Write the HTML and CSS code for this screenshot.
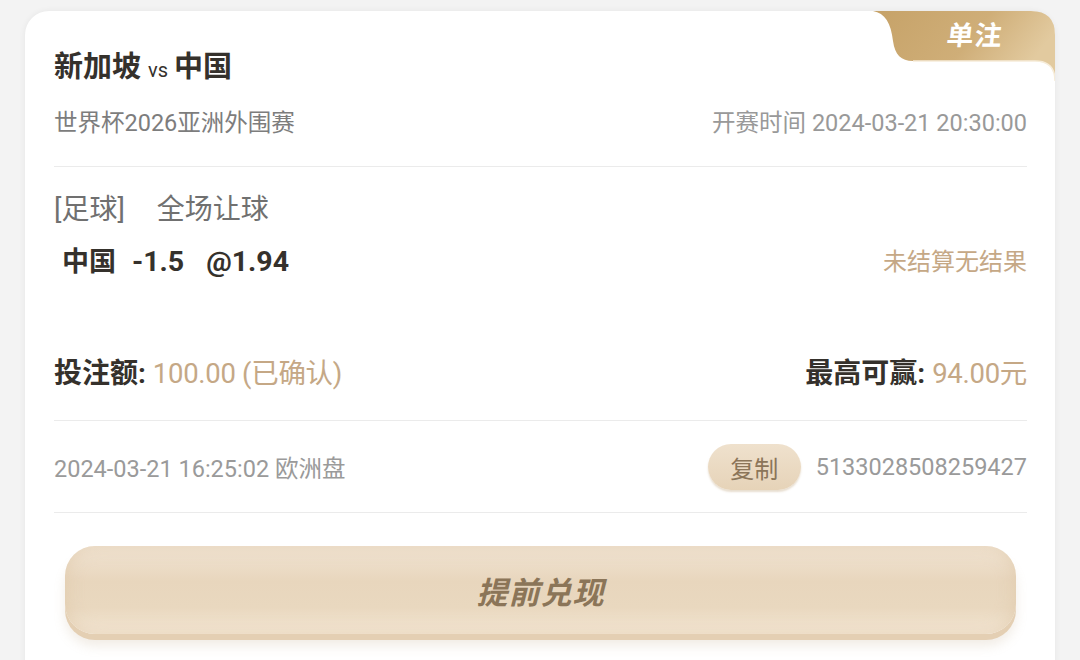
FILE: index.html
```html
<!DOCTYPE html>
<html lang="zh-CN">
<head>
    <meta charset="UTF-8">
    <meta name="viewport" content="width=device-width, initial-scale=1.0">
    <title>注单详情</title>
    <link rel="stylesheet" href="styles.css">
</head>
<body>
    <div class="card">
        <div class="tag">
            <svg class="tag-bg" width="182" height="72" viewBox="0 0 182 72">
                <defs>
                    <linearGradient id="gold" x1="0" y1="0" x2="1" y2="0.3">
                        <stop offset="0" stop-color="#c6a268"/>
                        <stop offset="0.6" stop-color="#cfae78"/>
                        <stop offset="1" stop-color="#e2ca9f"/>
                    </linearGradient>
                </defs>
                <path d="M0,0 H158 Q182,0 182,24 V70 Q182,50 162,50 H40 C28,50 22,44 20,30 C18,12 12,2 0,0 Z" fill="url(#gold)"/>
                <path d="M40,50 H162 Q182,50 182,70" fill="none" stroke="#f6ecd9" stroke-width="1.5"/>
            </svg>
            <span class="tag-text">单注</span>
        </div>

        <div class="section head">
            <h1 class="match">新加坡<span class="vs">vs</span>中国</h1>
            <div class="row meta">
                <span>世界杯2026亚洲外围赛</span>
                <span class="kickoff">开赛时间 2024-03-21 20:30:00</span>
            </div>
        </div>

        <div class="section bet">
            <div class="sport">
                <span>[足球]</span>
                <span>全场让球</span>
            </div>
            <div class="row pick">
                <span class="pick-main">中国<span class="line">-1.5</span><span class="odds">@1.94</span></span>
                <span class="status">未结算无结果</span>
            </div>
            <div class="row amount">
                <span class="label">投注额: <em>100.00 (已确认)</em></span>
                <span class="label">最高可赢: <em>94.00元</em></span>
            </div>
        </div>

        <div class="section order">
            <div class="row">
                <span class="muted">2024-03-21 16:25:02 欧洲盘</span>
                <span class="order-no">
                    <button class="copy-btn" type="button">复制</button>
                    <span class="muted">5133028508259427</span>
                </span>
            </div>
        </div>

        <button class="cashout" type="button">提前兑现</button>
    </div>
</body>
</html>
```

FILE: styles.css
```css
body {
    margin: 0;
    background: #f3f3f3;
    font-family: Roboto, "Noto Sans CJK SC", sans-serif;
    height: 660px;
    overflow: hidden;
}

.card {
    position: relative;
    margin: 11px 25px 0;
    padding: 0 28px 60px 29px;
    background: #fff;
    border-radius: 24px;
    box-shadow: 0 0 6px rgba(0, 0, 0, 0.06);
}

.tag {
    position: absolute;
    top: 0;
    right: 0;
    width: 182px;
    height: 72px;
}

.tag-bg {
    display: block;
}

.tag-text {
    position: absolute;
    top: 3px;
    left: 74px;
    font-family: "Noto Sans CJK SC", sans-serif;
    font-size: 27px;
    font-weight: 700;
    color: #fff;
    letter-spacing: 1px;
    transform: skewX(-6deg);
}

.section {
    border-bottom: 1px solid #ebebeb;
}

.row {
    display: flex;
    justify-content: space-between;
    align-items: center;
}

.head {
    padding: 36px 0 28px;
}

.match {
    margin: 0;
    font-size: 29px;
    line-height: 40px;
    font-weight: 700;
    color: #35312c;
}

.vs {
    margin: 0 6px 0 7px;
    font-family: Roboto, sans-serif;
    font-size: 20px;
    font-weight: 400;
}

.meta {
    margin-top: 18px;
    font-size: 23.5px;
    line-height: 30px;
    color: #7d7d7d;
}

.meta .kickoff {
    color: #999;
}

.bet {
    padding: 25px 0 26px;
}

.sport {
    display: flex;
    gap: 32px;
    font-size: 28px;
    line-height: 36px;
    color: #707070;
}

.pick {
    margin-top: 16px;
    line-height: 36px;
}

.pick-main {
    padding-left: 8px;
    font-size: 27px;
    font-weight: 700;
    color: #35312c;
}

.pick-main .line,
.pick-main .odds {
    font-size: 28.5px;
}

.pick-main .line {
    margin-left: 16px;
}

.pick-main .odds {
    margin-left: 22px;
}

.status {
    font-size: 24px;
    color: #c5a886;
}

.amount {
    margin-top: 74px;
    line-height: 40px;
}

.label {
    font-size: 28px;
    font-weight: 700;
    color: #35312c;
}

.label em {
    font-style: normal;
    font-weight: 400;
    font-size: 27.5px;
    letter-spacing: -0.3px;
    color: #c5a886;
}

.order {
    padding: 23px 0 22px;
}

.muted {
    font-size: 23.5px;
    color: #9a9a9a;
}

.order-no {
    display: flex;
    align-items: center;
    gap: 15px;
}

.copy-btn {
    width: 93px;
    height: 46px;
    border: none;
    border-radius: 23px;
    background: linear-gradient(to bottom, #efe1cd, #e6d3b8);
    box-shadow: 0 2px 2px rgba(190, 160, 120, 0.35);
    font-family: "Noto Sans CJK SC", sans-serif;
    font-size: 24px;
    color: #8b7559;
}

.cashout {
    display: block;
    width: 951px;
    height: 88px;
    margin: 33px 0 0 11px;
    border: none;
    border-radius: 30px;
    background: linear-gradient(to bottom, #f1e4d3 0%, #e8d6bd 40%, #e9d8bf 70%, #f4e7d5 100%);
    box-shadow: inset 0 0 18px rgba(214, 188, 152, 0.45), 0 6px 0 #e4cfb3, 0 12px 12px rgba(180, 150, 110, 0.18);
    font-family: "Noto Sans CJK SC", sans-serif;
    font-size: 31px;
    font-weight: 700;
    color: #8b7558;
    font-style: italic;
    letter-spacing: 1px;
}
```
